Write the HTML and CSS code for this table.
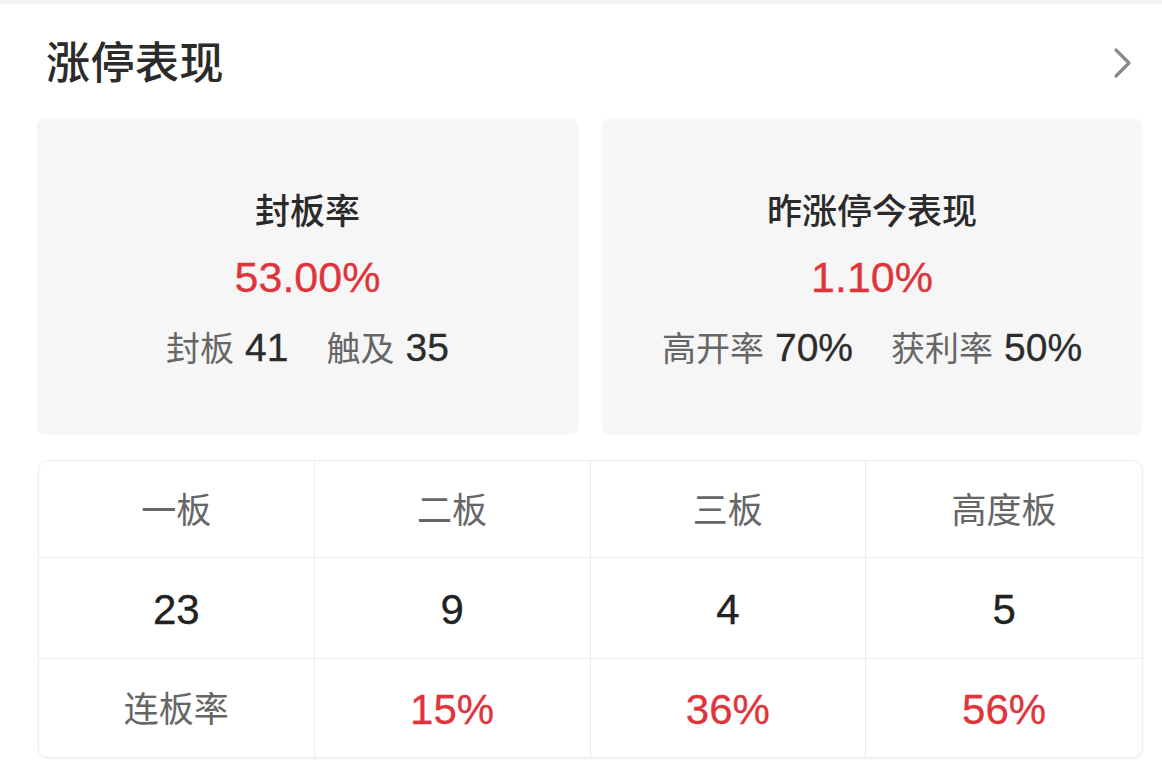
FILE: index.html
```html
<!DOCTYPE html>
<html lang="zh-CN">
<head>
<meta charset="utf-8">
<link rel="stylesheet" href="styles.css">
</head>
<body>
<div class="topbar"></div>
<div class="panel">
  <div class="header">
    <h1 class="title">涨停表现</h1>
    <svg class="chev" width="22" height="32" viewBox="0 0 22 32"><path d="M4 3 L17 16 L4 29" fill="none" stroke="#8a8a8a" stroke-width="3.2" stroke-linecap="round" stroke-linejoin="round"/></svg>
  </div>
  <div class="cards">
    <div class="card">
      <div class="card-title">封板率</div>
      <div class="card-value">53.00%</div>
      <div class="card-sub">
        <span class="pair"><span class="lbl">封板</span><span class="num">41</span></span>
        <span class="pair"><span class="lbl">触及</span><span class="num">35</span></span>
      </div>
    </div>
    <div class="card">
      <div class="card-title">昨涨停今表现</div>
      <div class="card-value">1.10%</div>
      <div class="card-sub">
        <span class="pair"><span class="lbl">高开率</span><span class="num">70%</span></span>
        <span class="pair"><span class="lbl">获利率</span><span class="num">50%</span></span>
      </div>
    </div>
  </div>
  <div class="table">
    <div class="cell head">一板</div>
    <div class="cell head">二板</div>
    <div class="cell head">三板</div>
    <div class="cell head">高度板</div>
    <div class="cell count">23</div>
    <div class="cell count">9</div>
    <div class="cell count">4</div>
    <div class="cell count">5</div>
    <div class="cell head">连板率</div>
    <div class="cell rate">15%</div>
    <div class="cell rate">36%</div>
    <div class="cell rate">56%</div>
  </div>
</div>
</body>
</html>
```
FILE: styles.css
```css
* { box-sizing: border-box; }
html, body {
  margin: 0;
  padding: 0;
  background: #ffffff;
}
body {
  width: 1162px;
  height: 773px;
  overflow: hidden;
  font-family: "Liberation Sans", "Noto Sans CJK SC", sans-serif;
  color: #333;
}
.topbar {
  height: 4px;
  background: #f2f2f2;
}
.panel {
  padding: 0 20px 0 37px;
}
.header {
  height: 115px;
  display: flex;
  align-items: center;
  justify-content: space-between;
  padding: 0 8px 0 9px;
}
.title {
  margin: 0;
  margin-top: -4px;
  font-size: 44px;
  font-weight: 500;
  color: #2b2b2b;
  font-family: "Noto Sans CJK SC", sans-serif;
  letter-spacing: 0.5px;
}
.chev {
  margin-top: 2px;
}
.cards {
  display: grid;
  grid-template-columns: 541px 540px;
  gap: 24px;
}
.card {
  height: 315px;
  background: #f6f6f6;
  border-radius: 8px;
  box-shadow: 0 0 3px rgba(0,0,0,0.04);
  display: flex;
  flex-direction: column;
  align-items: center;
  padding-top: 68px;
}
.card-title {
  font-family: "Noto Sans CJK SC", sans-serif;
  font-size: 35px;
  font-weight: 500;
  line-height: 44px;
  color: #2a2a2a;
}
.card-value {
  margin-top: 22px;
  font-size: 43px;
  line-height: 48px;
  color: #e0343c;
  -webkit-text-stroke: 0.3px #e0343c;
}
.card-sub {
  margin-top: 24px;
  display: flex;
  gap: 38px;
  line-height: 44px;
}
.pair {
  display: flex;
  align-items: baseline;
  gap: 11px;
}
.lbl {
  font-family: "Noto Sans CJK SC", sans-serif;
  font-size: 34px;
  color: #666;
}
.num {
  font-size: 39px;
  color: #2b2b2b;
  -webkit-text-stroke: 0.3px #2b2b2b;
}
.table {
  margin-top: 26px;
  width: 1105px;
  margin-left: 1px;
  display: grid;
  grid-template-columns: repeat(4, 1fr);
  grid-template-rows: 97px 101px 98px;
  border: 1px solid #ececec;
  border-radius: 10px;
  box-shadow: 0 1px 3px rgba(0,0,0,0.05);
  overflow: hidden;
}
.cell {
  display: flex;
  align-items: center;
  justify-content: center;
  border-right: 1px solid #ececec;
  border-bottom: 1px solid #ececec;
}
.cell:nth-child(4n) { border-right: none; }
.cell:nth-child(n+9) { border-bottom: none; }
.head {
  font-family: "Noto Sans CJK SC", sans-serif;
  font-size: 35px;
  color: #666;
  padding-bottom: 4px;
}
.count {
  font-size: 42px;
  color: #222;
  -webkit-text-stroke: 0.3px #222;
  padding-top: 4px;
}
.rate {
  font-size: 42px;
  color: #e0343c;
  -webkit-text-stroke: 0.3px #e0343c;
  padding-top: 3px;
}
```
